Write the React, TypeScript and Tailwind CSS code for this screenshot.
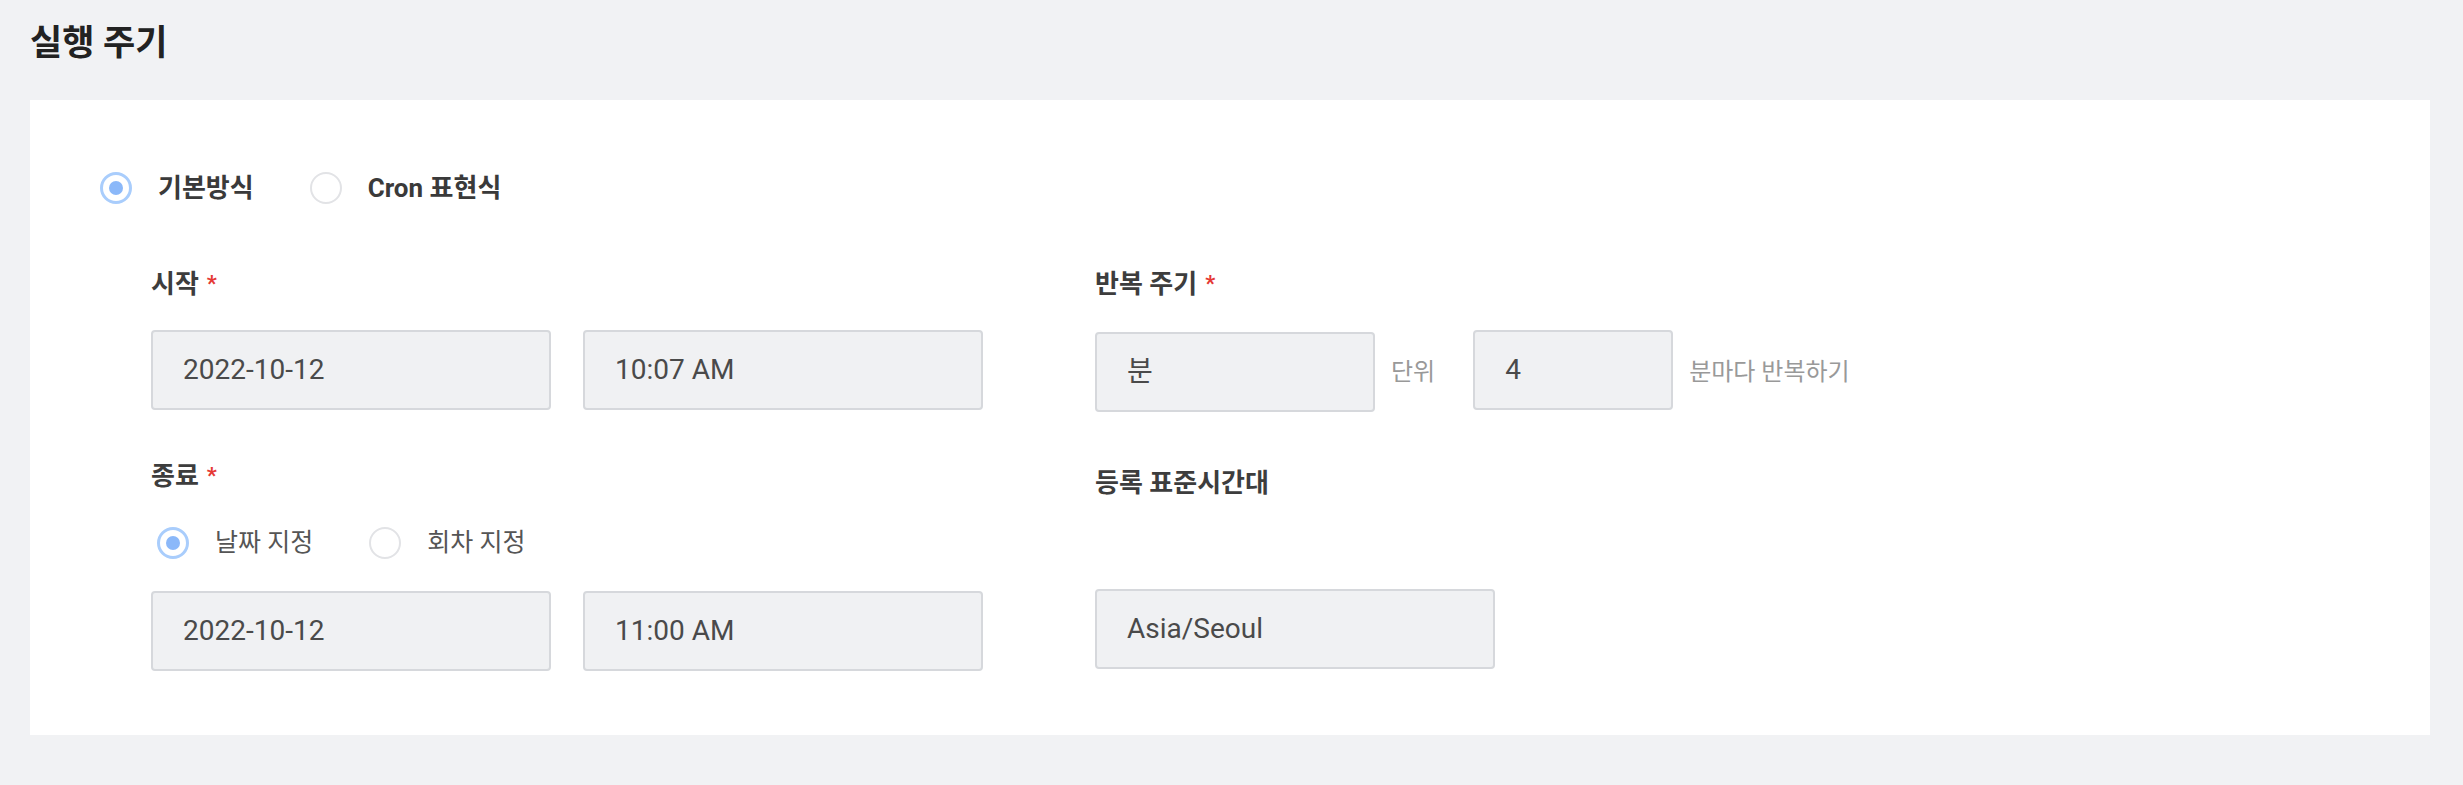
const font = { fontFamily: 'Roboto, "Noto Sans CJK KR", sans-serif' };

const Radio = ({ checked, label, bold }: { checked?: boolean; label: string; bold?: boolean }) => (
  <div className="flex items-center gap-[26px]">
    {checked ? (
      <span className="flex h-[32px] w-[32px] items-center justify-center rounded-full border-[3px] border-[#a9cdfc] bg-white">
        <span className="h-[14px] w-[14px] rounded-full bg-[#8bb8f9]" />
      </span>
    ) : (
      <span className="h-[32px] w-[32px] rounded-full border-2 border-[#e2e3e6] bg-white" />
    )}
    <span className={`leading-[32px] ${bold ? 'text-[26px] font-bold text-[#3a3a3a]' : 'text-[25px] text-[#555]'}`}>{label}</span>
  </div>
);

const Label = ({ text, required }: { text: string; required?: boolean }) => (
  <div className="flex h-[32px] items-center gap-[8px] text-[26px] font-bold leading-[32px] text-[#3d3d3d]">
    <span>{text}</span>
    {required && <span className="text-[22px] text-[#e53935]">*</span>}
  </div>
);

const Field = ({ value, w }: { value: string; w: string }) => (
  <div className={`flex h-[80px] ${w} items-center rounded-[4px] border-2 border-[#d6d8dc] bg-[#f0f1f3] pl-[30px] text-[28px] text-[#4a4a4a]`}>
    {value}
  </div>
);

export default function App() {
  return (
    <div className="min-h-[785px] bg-[#f1f2f4] pb-[50px] pl-[30px] pr-[33px] pt-[20px]" style={font}>
      <h1 className="flex h-[48px] items-center text-[35px] font-bold text-[#222]">실행 주기</h1>

      <div className="mt-[32px] bg-white pb-[64px] pl-[70px] pt-[70px]">
        <div className="flex h-[36px] items-center gap-[56px]">
          <Radio checked label="기본방식" bold />
          <Radio label="Cron 표현식" bold />
        </div>

        <div className="ml-[51px] mt-[62px] grid grid-cols-[944px_1fr] gap-y-[46px]">
          {/* 시작 */}
          <div className="flex flex-col gap-[30px]">
            <Label text="시작" required />
            <div className="flex gap-[32px]">
              <Field value="2022-10-12" w="w-[400px]" />
              <Field value="10:07 AM" w="w-[400px]" />
            </div>
          </div>

          {/* 반복 주기 */}
          <div className="flex flex-col gap-[30px]">
            <Label text="반복 주기" required />
            <div className="flex items-center">
              <Field value="분" w="w-[280px]" />
              <span className="ml-[16px] text-[24px] text-[#999]">단위</span>
              <div className="mb-[4px] ml-[38px]">
                <Field value="4" w="w-[200px]" />
              </div>
              <span className="ml-[16px] text-[24px] text-[#999]">분마다 반복하기</span>
            </div>
          </div>

          {/* 종료 */}
          <div className="flex flex-col">
            <Label text="종료" required />
            <div className="mt-[33px] flex h-[36px] items-center gap-[56px] pl-[6px]">
              <Radio checked label="날짜 지정" />
              <Radio label="회차 지정" />
            </div>
            <div className="mt-[30px] flex gap-[32px]">
              <Field value="2022-10-12" w="w-[400px]" />
              <Field value="11:00 AM" w="w-[400px]" />
            </div>
          </div>

          {/* 등록 표준시간대 */}
          <div className="flex flex-col">
            <div className="mt-[7px]">
              <Label text="등록 표준시간대" />
            </div>
            <div className="mb-[2px] mt-auto">
              <Field value="Asia/Seoul" w="w-[400px]" />
            </div>
          </div>
        </div>
      </div>
    </div>
  );
}
